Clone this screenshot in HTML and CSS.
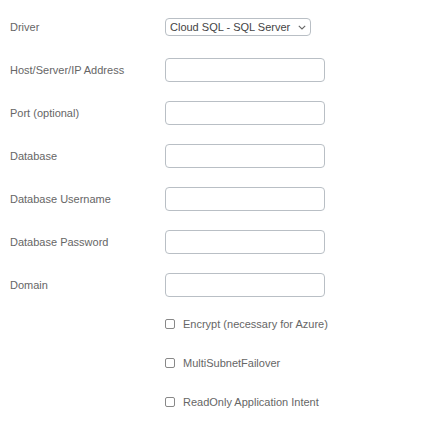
FILE: index.html
```html
<!DOCTYPE html>
<html>
<head>
<meta charset="utf-8">
<link rel="stylesheet" href="styles.css">
</head>
<body>
<form class="form">
  <div class="row">
    <label class="label">Driver</label>
    <div class="select-wrap">
      <select class="select"><option>Cloud SQL - SQL Server</option></select>
      <svg class="chev" width="8" height="5" viewBox="0 0 8 5"><path d="M0.8 0.8 L4 4 L7.2 0.8" fill="none" stroke="#666" stroke-width="1.1"/></svg>
    </div>
  </div>
  <div class="row"><label class="label">Host/Server/IP Address</label><input class="input" type="text"></div>
  <div class="row"><label class="label">Port (optional)</label><input class="input" type="text"></div>
  <div class="row"><label class="label">Database</label><input class="input" type="text"></div>
  <div class="row"><label class="label">Database Username</label><input class="input" type="text"></div>
  <div class="row"><label class="label">Database Password</label><input class="input" type="password"></div>
  <div class="row"><label class="label">Domain</label><input class="input" type="text"></div>
  <div class="checks">
    <label class="check"><input type="checkbox" class="cb"><span>Encrypt (necessary for Azure)</span></label>
    <label class="check"><input type="checkbox" class="cb"><span>MultiSubnetFailover</span></label>
    <label class="check"><input type="checkbox" class="cb"><span>ReadOnly Application Intent</span></label>
  </div>
</form>
</body>
</html>
```
FILE: styles.css
```css
html, body {
  margin: 0;
  padding: 0;
  background: #fff;
}
body {
  font-family: "Liberation Sans", Arial, sans-serif;
  font-size: 11px;
  color: #666;
}
.form {
  padding: 15px 0 0 10px;
}
.row {
  display: flex;
  align-items: center;
  height: 24px;
  margin-bottom: 19px;
}
.label {
  width: 155px;
  flex: none;
  color: #666;
}
.select-wrap {
  position: relative;
  width: 146px;
  height: 18px;
}
.select {
  appearance: none;
  -webkit-appearance: none;
  box-sizing: border-box;
  width: 146px;
  height: 18px;
  margin: 0;
  padding: 0 0 0 4px;
  border: 1px solid #b9bfc5;
  border-radius: 4px;
  background: #fff;
  font-family: "Liberation Sans", Arial, sans-serif;
  font-size: 11px;
  color: #444;
  line-height: 16px;
}
.chev {
  position: absolute;
  right: 5px;
  top: 7px;
  pointer-events: none;
}
.input {
  box-sizing: border-box;
  width: 160px;
  height: 24px;
  margin: 0;
  padding: 0 4px;
  border: 1px solid #b9bfc5;
  border-radius: 4px;
  background: #fff;
  font-family: "Liberation Sans", Arial, sans-serif;
  font-size: 11px;
}
.checks {
  display: flex;
  flex-direction: column;
  gap: 23px;
  padding-left: 155px;
  margin-top: 3px;
}
.check {
  display: flex;
  align-items: center;
  gap: 8px;
  height: 16px;
  color: #666;
}
.cb {
  appearance: none;
  -webkit-appearance: none;
  margin: 0;
  width: 10px;
  height: 10px;
  border: 1px solid #888;
  border-radius: 2px;
  background: #fff;
  flex: none;
}
```
